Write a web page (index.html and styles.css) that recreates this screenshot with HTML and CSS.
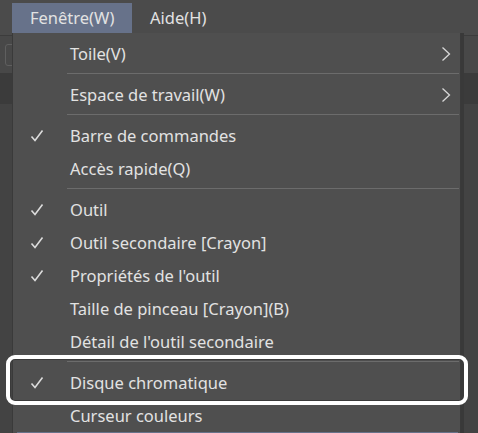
FILE: index.html
```html
<!DOCTYPE html>
<html lang="fr">
<head>
<meta charset="utf-8">
<link rel="stylesheet" href="styles.css">
</head>
<body>
<div class="app">
  <div class="menubar">
    <div class="mb-item active">Fenêtre(W)</div>
    <div class="mb-item">Aide(H)</div>
  </div>
  <div class="toolbar">
    <div class="tool-icon"></div>
  </div>
  <div class="strip"></div>
  <div class="workspace"></div>

  <div class="menu">
    <div class="row"><span class="check"></span><span class="label">Toile(V)</span><span class="arrow"><svg width="10" height="16" viewBox="0 0 10 16"><polyline points="1.5,1.5 8.5,8 1.5,14.5" fill="none" stroke="#d8d8d8" stroke-width="1.3"/></svg></span></div>
    <div class="sep"></div>
    <div class="row"><span class="check"></span><span class="label">Espace de travail(W)</span><span class="arrow"><svg width="10" height="16" viewBox="0 0 10 16"><polyline points="1.5,1.5 8.5,8 1.5,14.5" fill="none" stroke="#d8d8d8" stroke-width="1.3"/></svg></span></div>
    <div class="sep"></div>
    <div class="row"><span class="check"><svg width="14" height="14" viewBox="0 0 14 14"><polyline points="1.5,7.5 5,11.5 12.5,1.5" fill="none" stroke="#dcdcdc" stroke-width="1.6"/></svg></span><span class="label">Barre de commandes</span></div>
    <div class="row"><span class="check"></span><span class="label">Accès rapide(Q)</span></div>
    <div class="sep"></div>
    <div class="row"><span class="check"><svg width="14" height="14" viewBox="0 0 14 14"><polyline points="1.5,7.5 5,11.5 12.5,1.5" fill="none" stroke="#dcdcdc" stroke-width="1.6"/></svg></span><span class="label">Outil</span></div>
    <div class="row"><span class="check"><svg width="14" height="14" viewBox="0 0 14 14"><polyline points="1.5,7.5 5,11.5 12.5,1.5" fill="none" stroke="#dcdcdc" stroke-width="1.6"/></svg></span><span class="label">Outil secondaire [Crayon]</span></div>
    <div class="row"><span class="check"><svg width="14" height="14" viewBox="0 0 14 14"><polyline points="1.5,7.5 5,11.5 12.5,1.5" fill="none" stroke="#dcdcdc" stroke-width="1.6"/></svg></span><span class="label">Propriétés de l'outil</span></div>
    <div class="row"><span class="check"></span><span class="label">Taille de pinceau [Crayon](B)</span></div>
    <div class="row"><span class="check"></span><span class="label">Détail de l'outil secondaire</span></div>
    <div class="sep"></div>
    <div class="row"><span class="check"><svg width="14" height="14" viewBox="0 0 14 14"><polyline points="1.5,7.5 5,11.5 12.5,1.5" fill="none" stroke="#dcdcdc" stroke-width="1.6"/></svg></span><span class="label">Disque chromatique</span></div>
    <div class="row"><span class="check"></span><span class="label">Curseur couleurs</span></div>
    <div class="row hover"></div>
  </div>

  <div class="focus-box"></div>
</div>
</body>
</html>
```

FILE: styles.css
```css
html, body {
  margin: 0;
  padding: 0;
  background: #4a4a4a;
  overflow: hidden;
}
.app {
  position: relative;
  width: 478px;
  height: 433px;
  overflow: hidden;
  font-family: "Noto Sans", "Open Sans", sans-serif;
  color: #e2e2e2;
}
.menubar {
  height: 36px;
  display: flex;
  padding: 3px 0 0 12px;
  box-sizing: border-box;
  background: #4b4b4b;
  border-bottom: 1px solid #3c3c3c;
}
.mb-item {
  height: 30px;
  line-height: 30px;
  font-size: 16.5px;
  padding: 0 16px 0 18px;
}
.mb-item.active {
  background: #67728a;
  width: 86px;
}
.toolbar {
  height: 37px;
  background: #484848;
  position: relative;
}
.tool-icon {
  position: absolute;
  left: 5px;
  top: 8px;
  width: 12px;
  height: 20px;
  border: 1px solid #5f5f5f;
  border-radius: 3px;
}
.strip {
  height: 31px;
  background: #3b3b3b;
}
.workspace {
  height: 400px;
  background: #434343;
}
.menu {
  position: absolute;
  left: 12px;
  top: 33px;
  width: 447px;
  padding-top: 4px;
  background: #4f4f4f;
  border-left: 1px solid #3a3a3a;
  border-right: 1px solid #3a3a3a;
  box-shadow: 3px 0 0 #393939;
}
.row {
  height: 33px;
  display: flex;
  align-items: center;
  font-size: 16.5px;
}
.check {
  width: 57px;
  display: flex;
  justify-content: flex-start;
  padding-left: 17px;
  box-sizing: border-box;
}
.check svg { display: block; }
.label {
  flex: 1;
}
.arrow {
  width: 10px;
  margin-right: 9px;
  display: flex;
}
.arrow svg { display: block; }
.sep {
  height: 1px;
  margin: 3px 1px 4px 54px;
  background: #6c6c6c;
}
.row.hover {
  background: #67728a;
  margin: 0 2px 0 4px;
}
.focus-box {
  position: absolute;
  left: 6px;
  top: 355px;
  width: 454px;
  height: 42px;
  border: 4px solid #ffffff;
  border-radius: 9px;
  box-shadow: inset 0 0 0 1px #3a3a3a;
}
```
